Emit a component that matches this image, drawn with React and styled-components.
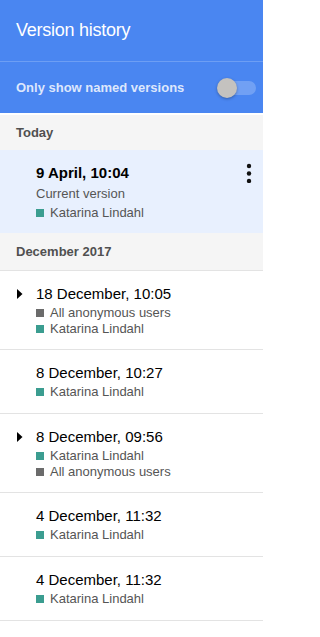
import React from "react";
import styled, { createGlobalStyle } from "styled-components";

const GlobalStyle = createGlobalStyle`
  body {
    margin: 0;
    background: #fff;
    font-family: "Liberation Sans", Arial, sans-serif;
  }
`;

const Panel = styled.div`
  width: 263px;
  background: #fff;
`;

const Header = styled.div`
  height: 61px;
  display: flex;
  align-items: center;
  padding-left: 16px;
  background: #4a86f1;
  color: #fff;
  font-size: 18px;
  letter-spacing: -0.25px;
`;

const ToggleBar = styled.div`
  height: 51px;
  display: flex;
  align-items: center;
  justify-content: space-between;
  padding: 0 7px 0 16px;
  background: #4a86f1;
  border-top: 1px solid #6d9ef4;
  color: rgba(255, 255, 255, 0.82);
  font-size: 13px;
  font-weight: bold;
`;

const Track = styled.div`
  position: relative;
  width: 36px;
  height: 14px;
  border-radius: 7px;
  background: rgba(255, 255, 255, 0.22);
`;

const Knob = styled.div`
  position: absolute;
  left: -3px;
  top: -3px;
  width: 20px;
  height: 20px;
  border-radius: 50%;
  background: #c4c2bf;
  box-shadow: 0 1px 3px rgba(0, 0, 0, 0.3);
`;

const SectionLabel = styled.div`
  height: ${(p) => p.$h}px;
  display: flex;
  align-items: center;
  padding-left: 16px;
  background: #f5f5f5;
  border-top: ${(p) => (p.$first ? "2px solid #fff" : "none")};
  border-bottom: ${(p) => (p.$first ? "none" : "1px solid #e3e3e3")};
  color: #505050;
  font-size: 13px;
  font-weight: bold;
`;

const Row = styled.div`
  position: relative;
  display: flex;
  padding: 12px 0 ${(p) => p.$pb}px;
  background: ${(p) => (p.$current ? "#e8f0fe" : "#fff")};
  border-bottom: ${(p) => (p.$current ? "none" : "1px solid #e3e3e3")};
`;

const CaretCell = styled.div`
  width: 36px;
  height: 22px;
  display: flex;
  align-items: center;
  padding-left: 17px;
  box-sizing: border-box;
  flex-shrink: 0;
`;

const Content = styled.div`
  display: flex;
  flex-direction: column;
`;

const Title = styled.div`
  line-height: 22px;
  font-size: 15px;
  font-weight: ${(p) => (p.$bold ? "bold" : "normal")};
  color: #000;
`;

const Sub = styled.div`
  display: flex;
  align-items: center;
  line-height: ${(p) => (p.$tall ? 19 : 16)}px;
  font-size: 13px;
  color: #555;
`;

const Swatch = styled.span`
  width: 8px;
  height: 8px;
  margin-right: 6px;
  background: ${(p) => p.$color};
`;

const MenuButton = styled.div`
  position: absolute;
  right: 11px;
  top: 13px;
`;

const TEAL = "#3b9d90";
const GREY = "#6b6b6b";

const Caret = () => (
  <svg width="6" height="10" viewBox="0 0 6 10">
    <path d="M0 0 L5.5 5 L0 10 Z" fill="#000" />
  </svg>
);

const Dots = () => (
  <svg width="6" height="20" viewBox="0 0 6 20">
    <circle cx="3" cy="3" r="2.2" fill="#111" />
    <circle cx="3" cy="10.5" r="2.2" fill="#111" />
    <circle cx="3" cy="18" r="2.2" fill="#111" />
  </svg>
);

const versions = [
  {
    title: "18 December, 10:05",
    expand: true,
    people: [
      ["All anonymous users", GREY],
      ["Katarina Lindahl", TEAL],
    ],
  },
  { title: "8 December, 10:27", people: [["Katarina Lindahl", TEAL]] },
  {
    title: "8 December, 09:56",
    expand: true,
    people: [
      ["Katarina Lindahl", TEAL],
      ["All anonymous users", GREY],
    ],
  },
  { title: "4 December, 11:32", people: [["Katarina Lindahl", TEAL]] },
  { title: "4 December, 11:32", people: [["Katarina Lindahl", TEAL]] },
];

export default function App() {
  return (
    <Panel>
      <GlobalStyle />
      <Header>Version history</Header>
      <ToggleBar>
        <span>Only show named versions</span>
        <Track>
          <Knob />
        </Track>
      </ToggleBar>

      <SectionLabel $first $h={35}>Today</SectionLabel>
      <Row $current $pb={11}>
        <CaretCell />
        <Content>
          <Title $bold>9 April, 10:04</Title>
          <Sub $tall>Current version</Sub>
          <Sub $tall>
            <Swatch $color={TEAL} />
            Katarina Lindahl
          </Sub>
        </Content>
        <MenuButton>
          <Dots />
        </MenuButton>
      </Row>

      <SectionLabel $h={37}>December 2017</SectionLabel>
      {versions.map((v, i) => (
        <Row key={i} $pb={v.people.length > 1 ? 12 : 13}>
          <CaretCell>{v.expand && <Caret />}</CaretCell>
          <Content>
            <Title>{v.title}</Title>
            {v.people.map(([name, color]) => (
              <Sub key={name}>
                <Swatch $color={color} />
                {name}
              </Sub>
            ))}
          </Content>
        </Row>
      ))}
    </Panel>
  );
}
